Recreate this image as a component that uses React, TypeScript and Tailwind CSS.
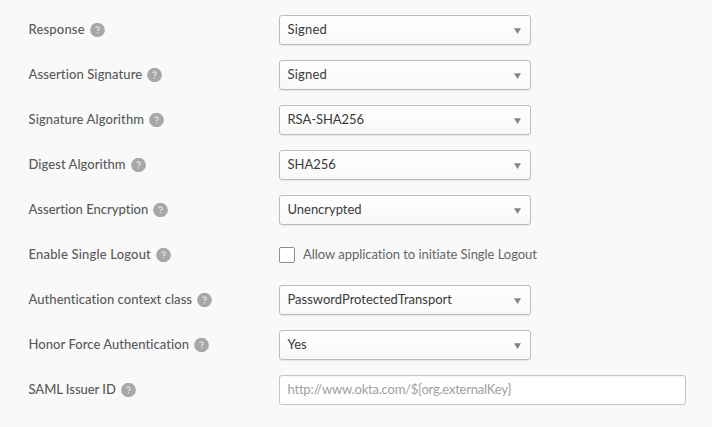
import React from 'react';

function HelpIcon() {
  return (
    <svg className="ml-[5px] block shrink-0" width="15" height="14" viewBox="0 0 15 14" aria-label="Help">
      <ellipse cx="7.5" cy="7" rx="7.4" ry="7.2" fill="#a7a7a7" />
      <path d="M5.7 5.3C5.8 4.3 6.5 3.9 7.5 3.9C8.6 3.9 9.3 4.5 9.3 5.4C9.3 6.7 7.5 6.6 7.5 8.1" fill="none" stroke="#e4e4e4" strokeWidth="1.2" />
      <rect x="6.9" y="9.2" width="1.2" height="1.2" fill="#e4e4e4" />
    </svg>
  );
}

function Row({ label, tracking, children }: { label: string; tracking: string; children: React.ReactNode }) {
  return (
    <div className="flex h-[30px] items-center">
      <div className="flex w-[250.5px] shrink-0 items-center">
        <span className={`pb-[2px] whitespace-nowrap font-medium text-[#5a5a5a] ${tracking}`}>{label}</span>
        <HelpIcon />
      </div>
      {children}
    </div>
  );
}

function Select({ value, tracking }: { value: string; tracking: string }) {
  return (
    <button
      type="button"
      className="flex h-[30px] w-[252px] items-center justify-between rounded-[3px] border border-[#bdbdbd] bg-linear-to-b from-white to-[#f8f8f8] pr-[9px] pl-[7.5px] shadow-[0_1px_1px_rgba(0,0,0,0.08)]"
    >
      <span className={`pb-[2px] whitespace-nowrap text-[#3a3a3a] ${tracking}`}>{value}</span>
      <svg className="mt-[2px] block" width="7" height="6" viewBox="0 0 7 6">
        <path d="M0 0.3H7L3.5 6Z" fill="#858585" />
      </svg>
    </button>
  );
}

export default function App() {
  return (
    <main className="flex h-[427px] w-[712px] flex-col gap-[15px] bg-[#f9f9f9] pt-[15px] pl-[28.5px] font-[Lato,sans-serif] text-[13px] leading-5 [font-variant-ligatures:none]">
      <Row label="Response" tracking="tracking-[0.18px]"><Select value="Signed" tracking="tracking-[0.2px]" /></Row>
      <Row label="Assertion Signature" tracking="tracking-[0.11px]"><Select value="Signed" tracking="tracking-[0.2px]" /></Row>
      <Row label="Signature Algorithm" tracking="tracking-[0.11px]"><Select value="RSA-SHA256" tracking="tracking-[-0.06px]" /></Row>
      <Row label="Digest Algorithm" tracking="tracking-[0.05px]"><Select value="SHA256" tracking="tracking-normal" /></Row>
      <Row label="Assertion Encryption" tracking="tracking-normal"><Select value="Unencrypted" tracking="tracking-[-0.03px]" /></Row>
      <Row label="Enable Single Logout" tracking="tracking-[0.18px]">
        <label className="flex items-center gap-2">
          <input type="checkbox" className="size-4 appearance-none rounded-[2px] border border-[#8f8f8f] bg-white" />
          <span className="pb-[2px] tracking-[-0.04px] text-[#666666]">Allow application to initiate Single Logout</span>
        </label>
      </Row>
      <Row label="Authentication context class" tracking="tracking-[0.05px]"><Select value="PasswordProtectedTransport" tracking="tracking-normal" /></Row>
      <Row label="Honor Force Authentication" tracking="tracking-[0.05px]"><Select value="Yes" tracking="tracking-normal" /></Row>
      <Row label="SAML Issuer ID" tracking="tracking-[-0.03px]">
        <input
          type="text"
          placeholder="http://www.okta.com/${org.externalKey}"
          className="h-[30px] w-[407px] rounded-[3px] border border-[#c4c4c4] bg-white px-[7.5px] pb-[2px] tracking-[-0.21px] shadow-[inset_0_1px_1px_rgba(0,0,0,0.04)] placeholder:text-[#a0a0a0]"
        />
      </Row>
    </main>
  );
}
